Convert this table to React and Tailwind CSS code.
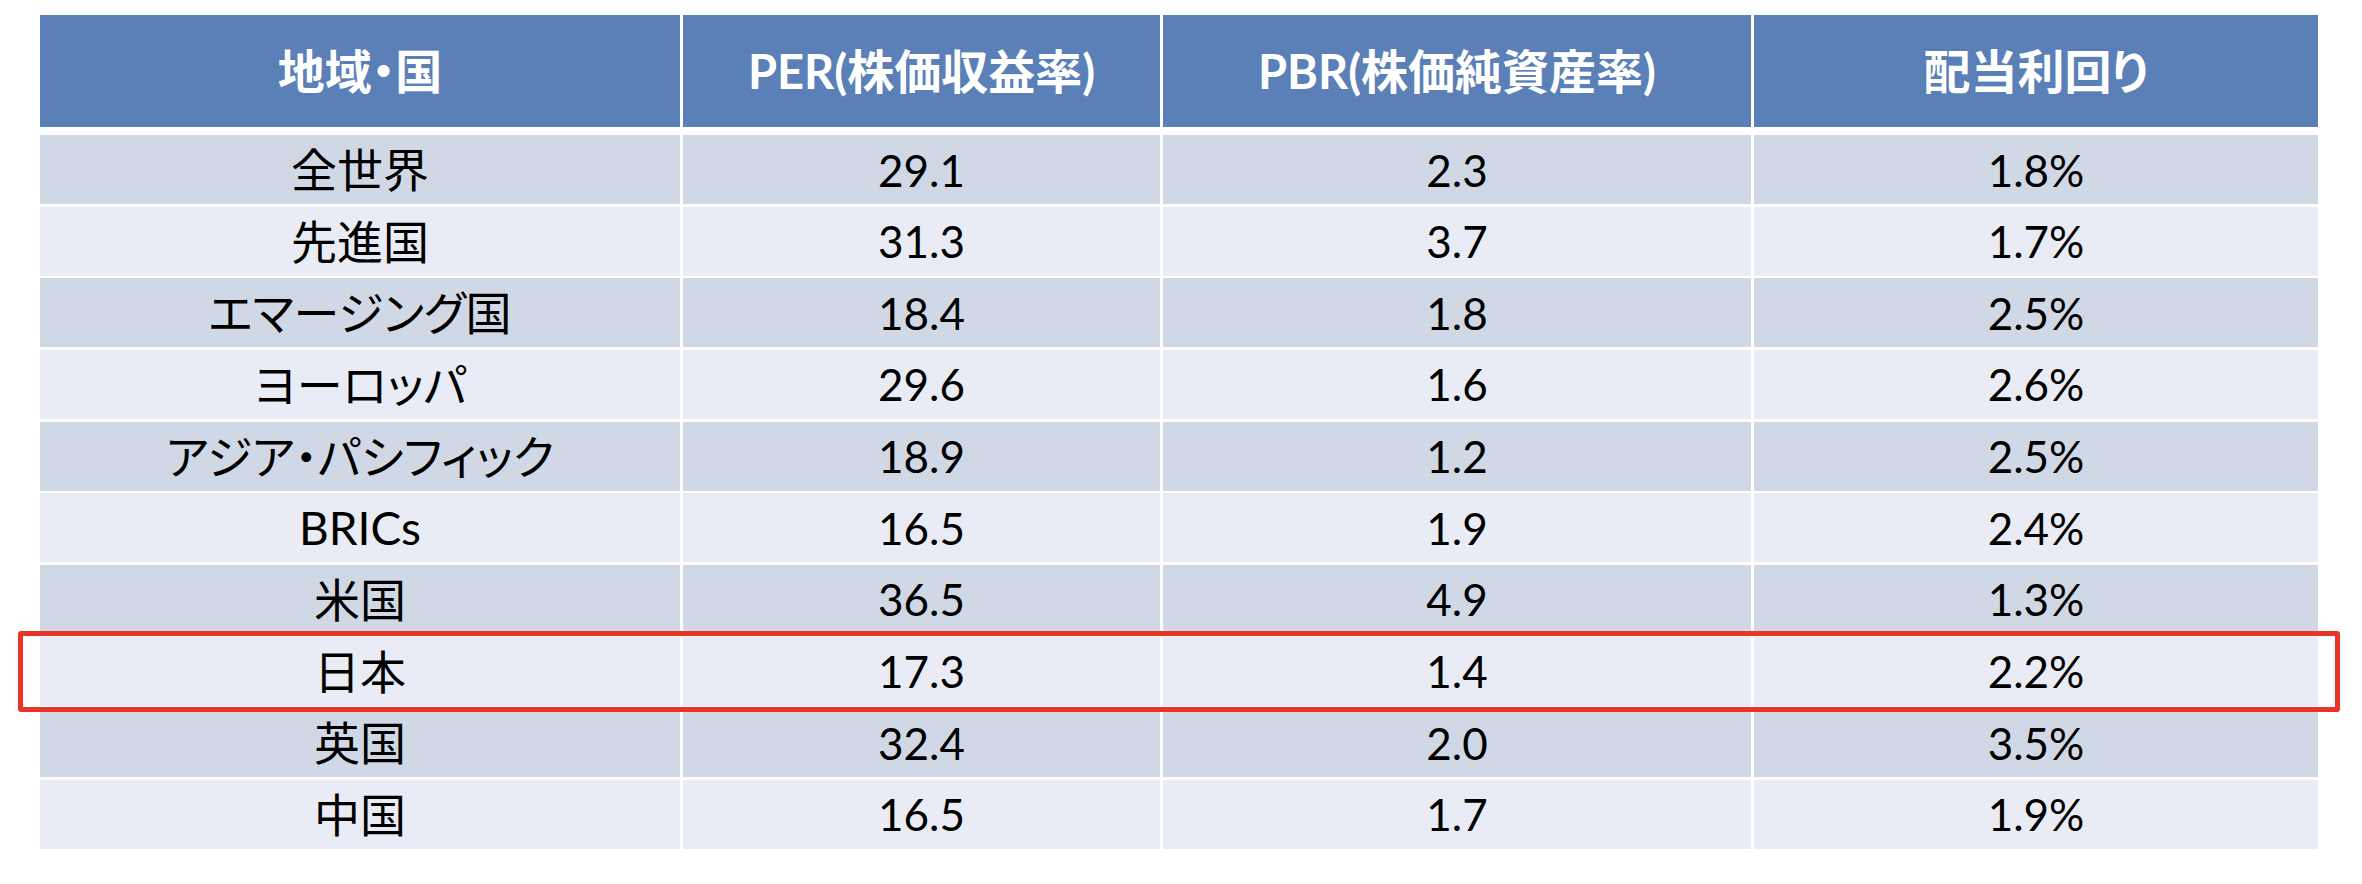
import React from 'react';

const headers = ['地域・国', 'PER(株価収益率)', 'PBR(株価純資産率)', '配当利回り'];

const rows = [
  ['全世界', '29.1', '2.3', '1.8%'],
  ['先進国', '31.3', '3.7', '1.7%'],
  ['エマージング国', '18.4', '1.8', '2.5%'],
  ['ヨーロッパ', '29.6', '1.6', '2.6%'],
  ['アジア・パシフィック', '18.9', '1.2', '2.5%'],
  ['BRICs', '16.5', '1.9', '2.4%'],
  ['米国', '36.5', '4.9', '1.3%'],
  ['日本', '17.3', '1.4', '2.2%'],
  ['英国', '32.4', '2.0', '3.5%'],
  ['中国', '16.5', '1.7', '1.9%'],
];

const cols = 'grid grid-cols-[640px_477px_588px_564px] gap-x-[3px]';

export default function App() {
  return (
    <div className="w-[2362px] h-[884px] bg-white pt-[15px] pl-[40px] font-['Lato','Noto_Sans_CJK_JP',sans-serif]">
      <div className="w-[2278px]">
        {/* Header */}
        <div className={cols}>
          {headers.map((h) => (
            <div
              key={h}
              className="h-[112px] bg-[#5a80b7] flex items-center justify-center text-white font-bold text-[47px] [font-feature-settings:'palt']"
            >
              {h}
            </div>
          ))}
        </div>

        {/* Body */}
        <div className="mt-[8px] flex flex-col gap-y-[2.67px]">
          {rows.map((r, i) => (
            <div key={r[0]} className={`relative ${cols}`}>
              {r.map((cell, j) => (
                <div
                  key={j}
                  className={`h-[69px] flex items-center justify-center text-black ${
                    j === 0 ? "text-[46px] [font-feature-settings:'palt']" : 'text-[44px]'
                  } ${i % 2 === 0 ? 'bg-[#d0d8e5]' : 'bg-[#e9ecf4]'}`}
                >
                  {cell}
                </div>
              ))}
              {r[0] === '日本' && (
                <div className="absolute z-10 -left-[22px] -right-[22px] -top-[6px] -bottom-[6px] border-[5px] border-[#ea3427] rounded-[3px] pointer-events-none" />
              )}
            </div>
          ))}
        </div>
      </div>
    </div>
  );
}
